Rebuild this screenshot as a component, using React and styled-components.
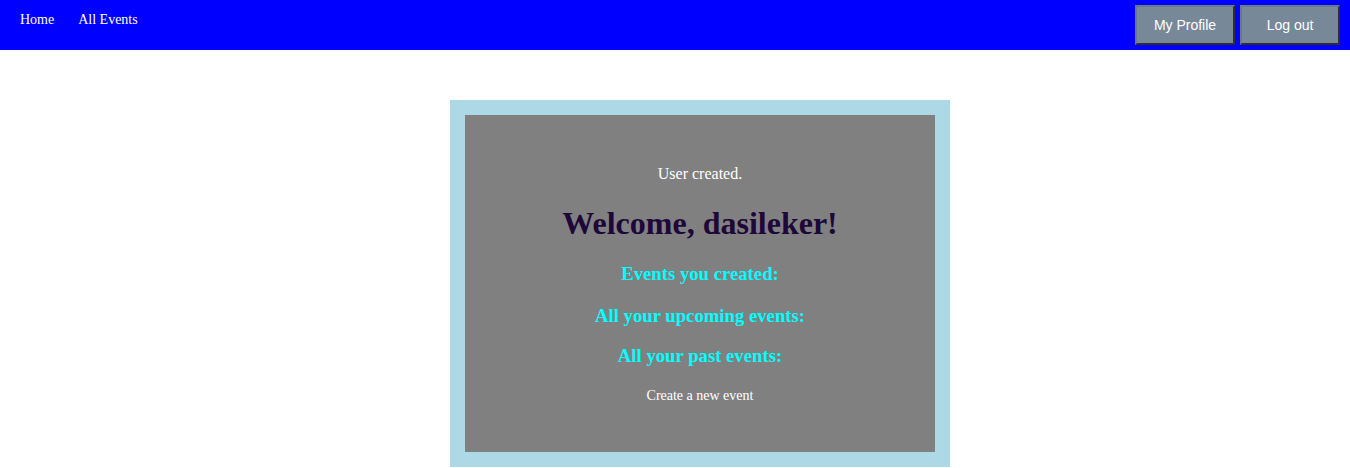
import React from 'react';
import styled, { createGlobalStyle } from 'styled-components';

const GlobalStyle = createGlobalStyle`
  body {
    margin: 0;
    background: #fff;
    font-family: "Liberation Serif", "Times New Roman", serif;
  }
`;

const NavBar = styled.nav`
  display: flex;
  justify-content: space-between;
  align-items: flex-start;
  height: 50px;
  background-color: #0000ff;
`;

const NavLinks = styled.div`
  display: flex;
  gap: 24px;
  padding: 12px 20px;
`;

const NavLink = styled.a`
  font-size: 14px;
  line-height: 16px;
  color: #fff;
  text-decoration: none;
`;

const NavActions = styled.div`
  display: flex;
  gap: 5px;
  padding: 5px 10px 0 0;
`;

const NavButton = styled.button`
  width: 100px;
  height: 40px;
  padding: 0;
  font-family: "Liberation Sans", Arial, sans-serif;
  font-size: 14px;
  color: #fff;
  background-color: #778899;
  border-style: solid;
  border-width: 2px;
  border-color: #6b7887 #2e2e2e #2e2e2e #6b7887;
  cursor: pointer;
`;

const Main = styled.main`
  display: flex;
  justify-content: center;
  padding: 50px 0 0 50px;
`;

const Frame = styled.section`
  width: 470px;
  padding: 15px;
  background-color: #add8e6;
`;

const Panel = styled.div`
  display: flex;
  flex-direction: column;
  align-items: center;
  height: 337px;
  box-sizing: border-box;
  padding: 50px 0;
  background-color: #808080;
  text-align: center;
`;

const Notice = styled.p`
  margin: 0;
  font-size: 16px;
  line-height: 18px;
  color: #fff;
`;

const Welcome = styled.h1`
  margin: 22px 0 0;
  font-size: 32px;
  line-height: 37px;
  color: #1d0839;
`;

const SectionTitle = styled.h3`
  margin: ${p => p.$gap || 19}px 0 0;
  font-size: 18.72px;
  line-height: 22px;
  color: #00ffff;
`;

const CreateLink = styled.a`
  margin-top: 21px;
  font-size: 14px;
  line-height: 16px;
  color: #fff;
  text-decoration: none;
`;

export default function App() {
  return (
    <>
      <GlobalStyle />
      <NavBar>
        <NavLinks>
          <NavLink href="#">Home</NavLink>
          <NavLink href="#">All Events</NavLink>
        </NavLinks>
        <NavActions>
          <NavButton>My Profile</NavButton>
          <NavButton>Log out</NavButton>
        </NavActions>
      </NavBar>
      <Main>
        <Frame>
          <Panel>
            <Notice>User created.</Notice>
            <Welcome>Welcome, dasileker!</Welcome>
            <SectionTitle $gap={21}>Events you created:</SectionTitle>
            <SectionTitle $gap={20}>All your upcoming events:</SectionTitle>
            <SectionTitle $gap={18}>All your past events:</SectionTitle>
            <CreateLink href="#">Create a new event</CreateLink>
          </Panel>
        </Frame>
      </Main>
    </>
  );
}
